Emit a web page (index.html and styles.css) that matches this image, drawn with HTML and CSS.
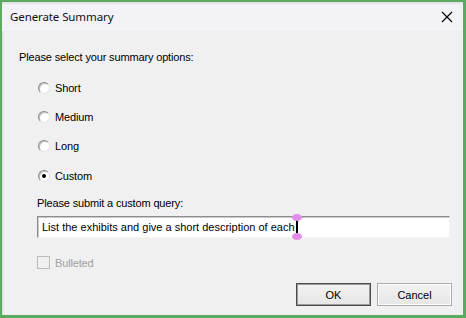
FILE: index.html
```html
<!DOCTYPE html>
<html lang="en">
<head>
  <meta charset="UTF-8" />
  <title>Generate Summary</title>
  <link rel="stylesheet" href="styles.css">
</head>
<body>

<div class="window">
  <div class="titlebar">
    <span class="title">Generate Summary</span>
    <svg class="close" width="12" height="12" viewBox="0 0 12 12">
      <path d="M1 1 L11 11 M11 1 L1 11" stroke="#000" stroke-width="1.2" fill="none"/>
    </svg>
  </div>

  <div class="content">
    <p class="label">Please select your summary options:</p>

    <div class="options">
      <label class="radio"><span class="dot"></span>Short</label>
      <label class="radio"><span class="dot"></span>Medium</label>
      <label class="radio"><span class="dot"></span>Long</label>
      <label class="radio checked"><span class="dot"></span>Custom</label>
    </div>

    <div class="query">
      <p class="label">Please submit a custom query:</p>
      <div class="edit">
        <span class="edit-text">List the exhibits and give a short description of each</span>
        <span class="caret">
          <span class="handle top"></span>
          <span class="handle bottom"></span>
        </span>
      </div>
      <label class="check disabled"><span class="box"></span>Bulleted</label>
    </div>

    <div class="buttons">
      <button class="btn default">OK</button>
      <button class="btn">Cancel</button>
    </div>
  </div>
</div>

</body>
</html>
```

FILE: styles.css
```css
html, body {
  margin: 0;
  padding: 0;
  background: #5aab5f;
}
.window {
  box-sizing: border-box;
  width: 466px;
  height: 318px;
  border: solid #5aab5f;
  border-width: 2px 3px 3px 2px;
  display: flex;
  flex-direction: column;
  font-family: "Liberation Sans", Arial, sans-serif;
  font-size: 11px;
  letter-spacing: -0.15px;
  color: #000;
}
.titlebar {
  height: 29px;
  flex: none;
  display: flex;
  align-items: center;
  justify-content: space-between;
  padding: 0 10px 0 8px;
  background: linear-gradient(to bottom, #dedde2 0, #f3f2f6 3px, #f3f2f6 100%);
}
.title {
  font-family: "Noto Sans", "Open Sans", sans-serif;
  font-size: 11.5px;
  letter-spacing: -0.1px;
  color: #111;
}
.close {
  display: block;
}
.content {
  flex: 1;
  background: #f0f0f0;
  box-shadow: inset 2px 0 2px -1px #d8d8d8;
  padding: 0 10px 0 17px;
  display: flex;
  flex-direction: column;
}
.label {
  margin: 0;
  line-height: 13px;
}
.content > .label {
  margin-top: 20px;
}
.options {
  display: flex;
  flex-direction: column;
  gap: 16px;
  margin: 17px 0 0 19px;
}
.radio {
  display: flex;
  align-items: center;
  height: 13px;
  gap: 5px;
}
.radio.checked {
  margin-top: 1px;
}
.dot {
  box-sizing: border-box;
  width: 12px;
  height: 12px;
  border-radius: 50%;
  background: #fff;
  border: 1px solid;
  border-color: #8a8a8a #e4e4e4 #e4e4e4 #8a8a8a;
  box-shadow: inset 1px 1px 0 #c0c0c0;
  position: relative;
}
.checked .dot::after {
  content: "";
  position: absolute;
  left: 3px;
  top: 3px;
  width: 4px;
  height: 4px;
  border-radius: 50%;
  background: #000;
}
.query {
  margin: 15px 0 0 18px;
}
.edit {
  box-sizing: border-box;
  margin-top: 6px;
  width: 413px;
  height: 22px;
  background: #fff;
  border: 1px solid;
  border-color: #8d8d8d #f4f4f4 #f4f4f4 #8d8d8d;
  box-shadow: inset 1px 1px 0 #c8c8c8;
  display: flex;
  align-items: center;
  padding-left: 4px;
  font-size: 11px;
  letter-spacing: 0;
}
.caret {
  position: relative;
  width: 2px;
  height: 14px;
  background: #000;
  margin-left: 1px;
}
.handle {
  position: absolute;
  left: -4px;
  width: 10px;
  height: 7px;
  border-radius: 50%;
  background: #e08ce8;
}
.handle.top {
  top: -6px;
}
.handle.bottom {
  bottom: -6px;
}
.check {
  display: flex;
  align-items: center;
  gap: 5px;
  margin-top: 18px;
  height: 13px;
}
.check.disabled {
  color: #a0a0a0;
}
.box {
  box-sizing: border-box;
  width: 13px;
  height: 13px;
  border: 1px solid #bcbcbc;
  background: #f0f0f0;
}
.buttons {
  display: flex;
  justify-content: flex-end;
  gap: 6px;
  margin-top: 14px;
  padding-right: 1px;
}
.btn {
  width: 75px;
  height: 23px;
  font-family: "Liberation Sans", Arial, sans-serif;
  font-size: 11px;
  color: #000;
  background: linear-gradient(to bottom, #f2f2f2, #e6e6e6);
  border: 1px solid #acacac;
  box-shadow: inset 0 0 0 1px #fcfcfc;
  padding: 0;
}
.btn.default {
  border: 1px solid #4a4a4a;
  box-shadow: inset 0 0 0 1px #9c9c9c;
}
```
